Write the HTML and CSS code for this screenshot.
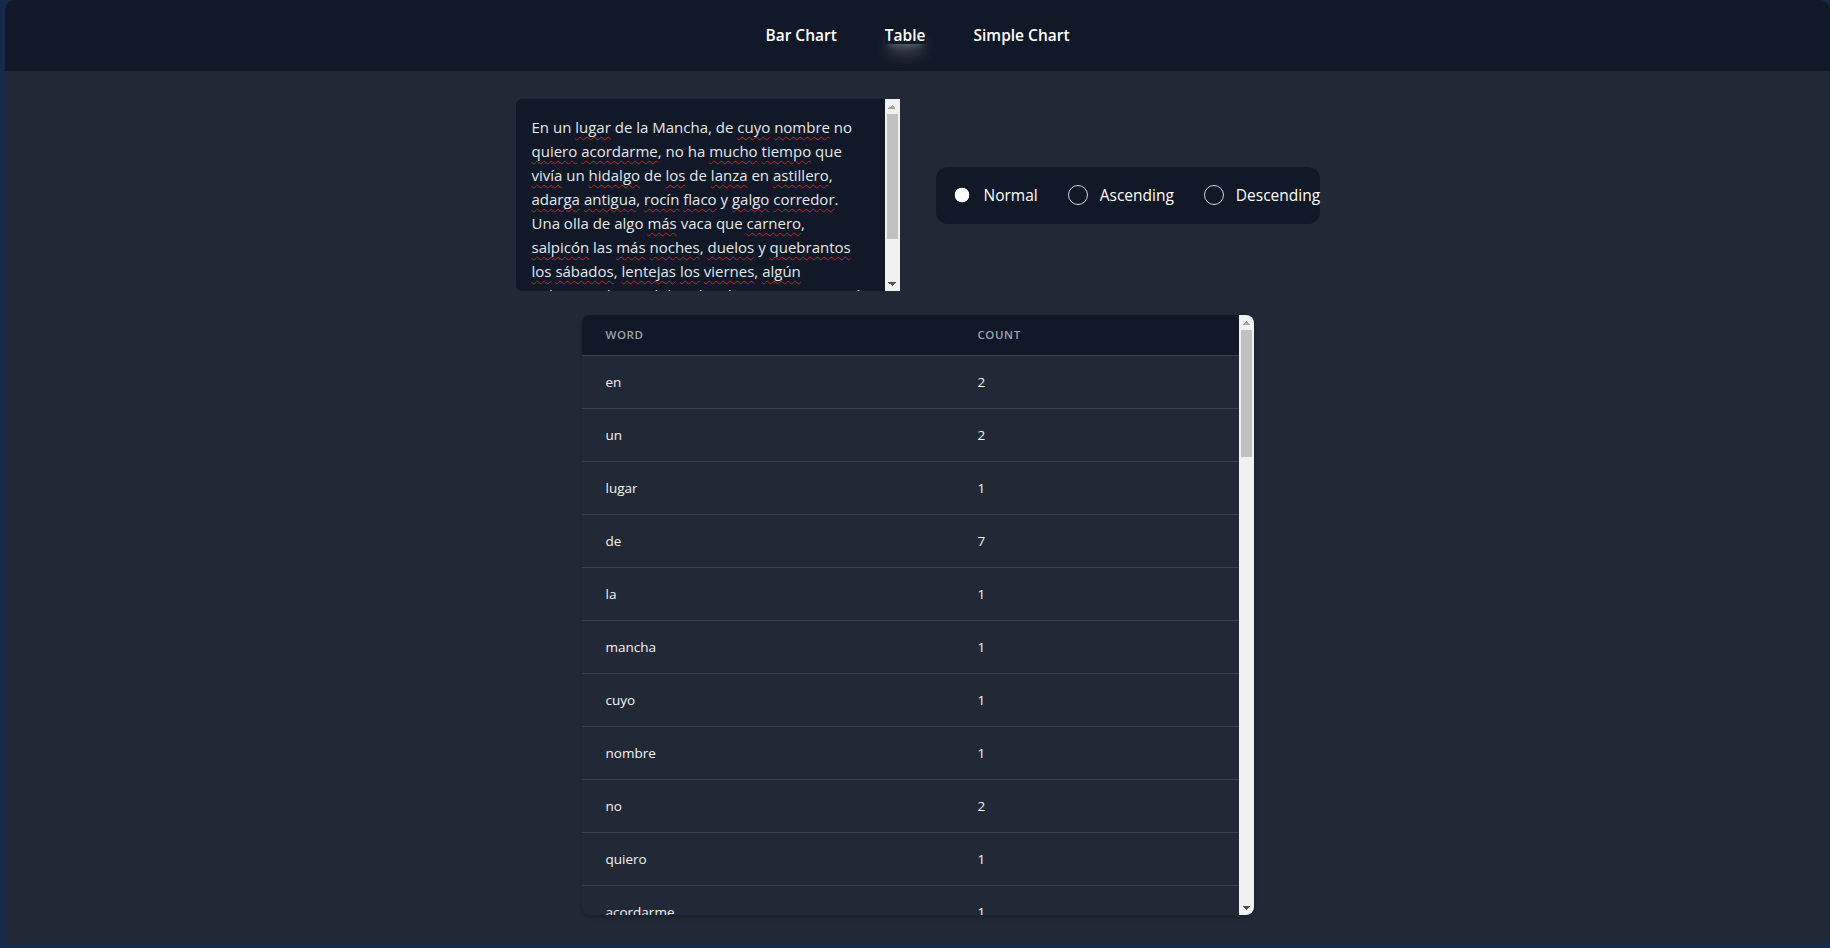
FILE: index.html
```html
<!DOCTYPE html>
<html lang="es">
<head>
<meta charset="utf-8">
<title>Word Count</title>
<link rel="stylesheet" href="styles.css">
</head>
<body>
<div class="app">
  <header class="topbar">
    <nav class="nav">
      <a class="nav-link" href="#">Bar Chart</a>
      <a class="nav-link active" href="#">Table</a>
      <a class="nav-link" href="#">Simple Chart</a>
    </nav>
  </header>
  <main class="main">
    <section class="controls">
      <div class="textarea-box">
        <div class="textarea" role="textbox" aria-multiline="true">
          <span class="line">En un <span class="sp">lugar</span> de la Mancha, de <span class="sp">cuyo</span> <span class="sp">nombre</span> no</span>
          <span class="line"><span class="sp">quiero</span> <span class="sp">acordarme</span>, no ha <span class="sp">mucho</span> <span class="sp">tiempo</span> que</span>
          <span class="line"><span class="sp">vivía</span> un <span class="sp">hidalgo</span> de <span class="sp">los</span> de <span class="sp">lanza</span> en <span class="sp">astillero</span>,</span>
          <span class="line"><span class="sp">adarga</span> <span class="sp">antigua</span>, <span class="sp">rocín</span> <span class="sp">flaco</span> y <span class="sp">galgo</span> <span class="sp">corredor</span>.</span>
          <span class="line">Una olla de algo <span class="sp">más</span> vaca que <span class="sp">carnero</span>,</span>
          <span class="line"><span class="sp">salpicón</span> las <span class="sp">más</span> <span class="sp">noches</span>, <span class="sp">duelos</span> y <span class="sp">quebrantos</span></span>
          <span class="line"><span class="sp">los</span> <span class="sp">sábados</span>, <span class="sp">lentejas</span> <span class="sp">los</span> <span class="sp">viernes</span>, <span class="sp">algún</span></span>
          <span class="line"><span class="sp">palomino</span> de <span class="sp">añadidura</span> <span class="sp">los</span> <span class="sp">domingos</span>, <span class="sp">consumían</span></span>
          <span class="line">las tres partes de su <span class="sp">hacienda</span>.</span>
        </div>
        <div class="scrollbar" aria-hidden="true">
          <span class="sb-btn sb-up"></span>
          <span class="sb-track"><span class="sb-thumb thumb-text"></span></span>
          <span class="sb-btn sb-down"></span>
        </div>
      </div>
      <div class="radios" role="radiogroup">
        <label class="radio-item"><input type="radio" name="order" class="radio" checked><span>Normal</span></label>
        <label class="radio-item"><input type="radio" name="order" class="radio"><span>Ascending</span></label>
        <label class="radio-item"><input type="radio" name="order" class="radio"><span>Descending</span></label>
      </div>
    </section>
    <div class="table-box">
      <div class="table-wrap">
        <table class="words">
          <colgroup><col class="col-word"><col></colgroup>
          <thead><tr><th>Word</th><th>Count</th></tr></thead>
          <tbody>
            <tr><td>en</td><td>2</td></tr>
            <tr><td>un</td><td>2</td></tr>
            <tr><td>lugar</td><td>1</td></tr>
            <tr><td>de</td><td>7</td></tr>
            <tr><td>la</td><td>1</td></tr>
            <tr><td>mancha</td><td>1</td></tr>
            <tr><td>cuyo</td><td>1</td></tr>
            <tr><td>nombre</td><td>1</td></tr>
            <tr><td>no</td><td>2</td></tr>
            <tr><td>quiero</td><td>1</td></tr>
            <tr><td>acordarme</td><td>1</td></tr>
            <tr><td>ha</td><td>1</td></tr>
            <tr><td>mucho</td><td>1</td></tr>
            <tr><td>tiempo</td><td>1</td></tr>
            <tr><td>que</td><td>2</td></tr>
            <tr><td>vivía</td><td>1</td></tr>
            <tr><td>hidalgo</td><td>1</td></tr>
            <tr><td>los</td><td>4</td></tr>
            <tr><td>lanza</td><td>1</td></tr>
            <tr><td>astillero</td><td>1</td></tr>
            <tr><td>adarga</td><td>1</td></tr>
            <tr><td>antigua</td><td>1</td></tr>
            <tr><td>rocín</td><td>1</td></tr>
            <tr><td>flaco</td><td>1</td></tr>
            <tr><td>y</td><td>2</td></tr>
            <tr><td>galgo</td><td>1</td></tr>
            <tr><td>corredor</td><td>1</td></tr>
            <tr><td>una</td><td>1</td></tr>
            <tr><td>olla</td><td>1</td></tr>
            <tr><td>algo</td><td>1</td></tr>
            <tr><td>más</td><td>2</td></tr>
            <tr><td>vaca</td><td>1</td></tr>
            <tr><td>carnero</td><td>1</td></tr>
            <tr><td>salpicón</td><td>1</td></tr>
            <tr><td>las</td><td>2</td></tr>
            <tr><td>noches</td><td>1</td></tr>
            <tr><td>duelos</td><td>1</td></tr>
            <tr><td>quebrantos</td><td>1</td></tr>
            <tr><td>sábados</td><td>1</td></tr>
            <tr><td>lentejas</td><td>1</td></tr>
            <tr><td>viernes</td><td>1</td></tr>
            <tr><td>algún</td><td>1</td></tr>
            <tr><td>palomino</td><td>1</td></tr>
            <tr><td>añadidura</td><td>1</td></tr>
            <tr><td>domingos</td><td>1</td></tr>
            <tr><td>consumían</td><td>1</td></tr>
            <tr><td>tres</td><td>1</td></tr>
            <tr><td>partes</td><td>1</td></tr>
            <tr><td>su</td><td>1</td></tr>
            <tr><td>hacienda</td><td>1</td></tr>
          </tbody>
        </table>
      </div>
      <div class="scrollbar" aria-hidden="true">
        <span class="sb-btn sb-up"></span>
        <span class="sb-track"><span class="sb-thumb thumb-table"></span></span>
        <span class="sb-btn sb-down"></span>
      </div>
    </div>
  </main>
</div>
</body>
</html>
```
FILE: styles.css
```css
* {
  box-sizing: border-box;
}

html,
body {
  margin: 0;
  height: 100%;
}

body {
  background: #152a4a;
  font-family: "Open Sans", "Noto Sans", sans-serif;
  color: #ffffff;
}

.app {
  margin-left: 5px;
  height: 944px;
  background: #212937;
  border-radius: 10px;
  overflow: hidden;
  display: flex;
  flex-direction: column;
}

.topbar {
  height: 71px;
  flex-shrink: 0;
  background: #111827;
  display: flex;
  align-items: center;
  justify-content: center;
}

.nav {
  display: flex;
  gap: 48px;
}

.nav-link {
  color: #ffffff;
  text-decoration: none;
  font-weight: 600;
  font-size: 15.5px;
  line-height: 17px;
}

.nav-link.active {
  background: #111827;
  box-shadow: 0 12px 16px -4px rgba(255, 255, 255, 0.3),
    0 5px 7px -4px rgba(255, 255, 255, 0.3);
}

.main {
  padding-top: 28px;
  display: flex;
  flex-direction: column;
  align-items: center;
  gap: 24px;
}

.controls {
  display: flex;
  align-items: center;
  gap: 36px;
}

/* fake textarea */
.textarea-box {
  width: 384px;
  height: 192px;
  display: flex;
  border-radius: 6px 0 0 6px;
  overflow: hidden;
}

.textarea {
  flex: 1;
  min-width: 0;
  padding: 16px;
  background: #111827;
  overflow: hidden;
  font-size: 15px;
  font-weight: 500;
  line-height: 24px;
  color: #e5e7eb;
}

.line {
  display: block;
  white-space: nowrap;
}

.sp {
  text-decoration: underline wavy #e01818;
  text-decoration-thickness: 1px;
  text-decoration-skip-ink: none;
  text-underline-offset: 3px;
}

/* classic scrollbar */
.scrollbar {
  width: 15px;
  flex-shrink: 0;
  background: #f1f1f1;
  display: flex;
  flex-direction: column;
}

.sb-btn {
  height: 15px;
  flex-shrink: 0;
  background-repeat: no-repeat;
  background-position: center;
  background-size: 8px 4px;
}

.sb-up {
  background-image: conic-gradient(from 135deg at 50% 0, #a3a3a3 0 90deg, transparent 0);
}

.sb-down {
  background-image: conic-gradient(from -45deg at 50% 100%, #505050 0 90deg, transparent 0);
}

.sb-track {
  flex: 1;
  padding: 0 2px;
}

.sb-thumb {
  display: block;
  background: #c1c1c1;
}

.thumb-text {
  height: 125px;
}

.thumb-table {
  height: 127px;
}

/* radios */
.radios {
  width: 384px;
  height: 57px;
  padding: 0 16px;
  background: #111827;
  border-radius: 12px;
  display: flex;
  align-items: center;
  gap: 30px;
}

.radio-item {
  display: flex;
  align-items: center;
  gap: 12px;
  font-size: 15.5px;
  font-weight: 500;
  white-space: nowrap;
  color: #ffffff;
}

.radio {
  appearance: none;
  -webkit-appearance: none;
  margin: 0;
  width: 20px;
  height: 20px;
  border-radius: 50%;
  border: 1px solid #d1d5db;
  background: transparent;
  flex-shrink: 0;
}

.radio:checked {
  border-color: transparent;
  background: radial-gradient(circle, #ffffff 0 7px, transparent 7.6px);
}

/* table */
.table-box {
  width: 672px;
  height: 600px;
  display: flex;
  border-radius: 8px;
  overflow: hidden;
  background: #212937;
  box-shadow: 0 2px 4px rgba(0, 0, 0, 0.25);
}

.table-wrap {
  flex: 1;
  min-width: 0;
  overflow: hidden;
}

.words {
  width: 100%;
  border-collapse: collapse;
  table-layout: fixed;
}

.col-word {
  width: 372px;
}

.words th {
  background: #111827;
  color: #9ca3af;
  font-size: 11.5px;
  font-weight: 600;
  text-transform: uppercase;
  letter-spacing: 0.05em;
  text-align: left;
  padding: 12px 24px;
  line-height: 16px;
  border-bottom: 1px solid #374151;
}

.words td {
  padding: 16px 24px;
  font-size: 13.5px;
  font-weight: 500;
  line-height: 20px;
  color: #f3f4f6;
  border-bottom: 1px solid #374151;
}
```
